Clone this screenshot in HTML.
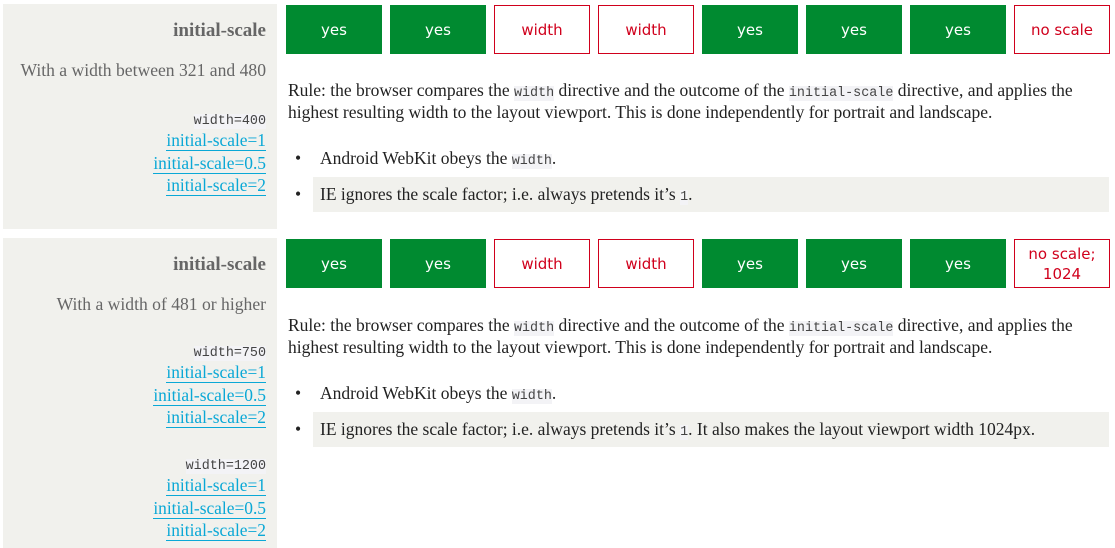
<!DOCTYPE html>
<html><head><meta charset="utf-8"><style>
*{margin:0;padding:0;box-sizing:border-box}
body{width:1115px;height:542px;background:#fff;position:relative;overflow:hidden;font-family:"Liberation Serif",serif;color:#222;font-size:17.5px}
.panel{position:absolute;left:3px;width:274px;background:#f1f1ed}
.r{position:absolute;right:11px;text-align:right;white-space:nowrap}
.h{font-weight:bold;color:#666;font-size:19px}
.g{color:#666;font-size:17.6px}
code{font-family:"Liberation Mono",monospace;font-size:13.4px;background:#f3f3f6;color:#444;line-height:1}
.lk{color:#0aa8d6;border-bottom:1.5px solid #0aa8d6;line-height:19px;font-size:17.4px}
.b{position:absolute;width:96px;height:49px;display:flex;align-items:center;justify-content:center;text-align:center;font-family:"DejaVu Sans",sans-serif;font-size:15px;line-height:20px}
.y{background:#008a30;color:#fff}
.w{border:1px solid #d0001c;color:#d0001c;background:#fff}
.p{position:absolute;left:288px;line-height:22px;white-space:nowrap}
.li{position:absolute;left:313px;width:796px;height:35px;line-height:35px;padding-left:7px;white-space:nowrap}
.li:before{content:"•";position:absolute;left:-18px}
</style></head><body>
<div class="panel" style="top:4px;height:225px">
<div class="r h" style="top:16px">initial-scale</div>
<div class="r g" style="top:56px">With a width between 321 and 480</div>
<div class="r" style="top:104px"><code>width=400</code></div>
<div class="r" style="top:126px"><span class="lk">initial-scale=1</span></div>
<div class="r" style="top:149px"><span class="lk">initial-scale=0.5</span></div>
<div class="r" style="top:171px"><span class="lk">initial-scale=2</span></div>
</div>
<div class="panel" style="top:238px;height:310px">
<div class="r h" style="top:16px">initial-scale</div>
<div class="r g" style="top:56px">With a width of 481 or higher</div>
<div class="r" style="top:102px"><code>width=750</code></div>
<div class="r" style="top:124px"><span class="lk">initial-scale=1</span></div>
<div class="r" style="top:147px"><span class="lk">initial-scale=0.5</span></div>
<div class="r" style="top:169px"><span class="lk">initial-scale=2</span></div>
<div class="r" style="top:215px"><code>width=1200</code></div>
<div class="r" style="top:237px"><span class="lk">initial-scale=1</span></div>
<div class="r" style="top:260px"><span class="lk">initial-scale=0.5</span></div>
<div class="r" style="top:282px"><span class="lk">initial-scale=2</span></div>
</div>

<div class="b y" style="left:286px;top:5px">yes</div>
<div class="b y" style="left:390px;top:5px">yes</div>
<div class="b w" style="left:494px;top:5px">width</div>
<div class="b w" style="left:598px;top:5px">width</div>
<div class="b y" style="left:702px;top:5px">yes</div>
<div class="b y" style="left:806px;top:5px">yes</div>
<div class="b y" style="left:910px;top:5px">yes</div>
<div class="b w" style="left:1014px;top:5px">no scale</div>

<div class="b y" style="left:286px;top:239px">yes</div>
<div class="b y" style="left:390px;top:239px">yes</div>
<div class="b w" style="left:494px;top:239px">width</div>
<div class="b w" style="left:598px;top:239px">width</div>
<div class="b y" style="left:702px;top:239px">yes</div>
<div class="b y" style="left:806px;top:239px">yes</div>
<div class="b y" style="left:910px;top:239px">yes</div>
<div class="b w" style="left:1014px;top:239px">no scale;<br>1024</div>

<div class="p" style="top:79px">Rule: the browser compares the <code>width</code> directive and the outcome of the <code>initial-scale</code> directive, and applies the<br>highest resulting width to the layout viewport. This is done independently for portrait and landscape.</div>
<div class="li" style="top:141px">Android WebKit obeys the <code>width</code>.</div>
<div class="li" style="top:177px;background:#f1f1ed">IE ignores the scale factor; i.e. always pretends it’s <code>1</code>.</div>

<div class="p" style="top:314px">Rule: the browser compares the <code>width</code> directive and the outcome of the <code>initial-scale</code> directive, and applies the<br>highest resulting width to the layout viewport. This is done independently for portrait and landscape.</div>
<div class="li" style="top:376px">Android WebKit obeys the <code>width</code>.</div>
<div class="li" style="top:412px;background:#f1f1ed">IE ignores the scale factor; i.e. always pretends it’s <code>1</code>. It also makes the layout viewport width 1024px.</div>
</body></html>
